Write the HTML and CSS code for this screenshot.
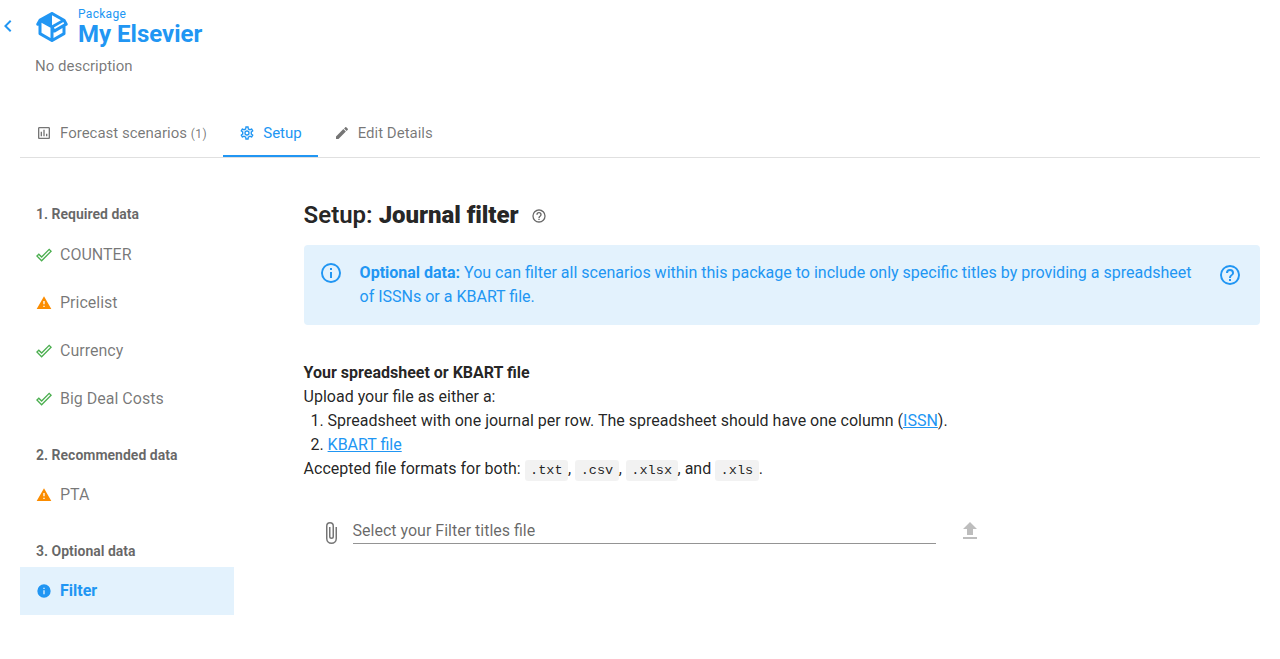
FILE: index.html
```
<!DOCTYPE html>
<html lang="en">
<head>
<meta charset="utf-8">
<title>My Elsevier - Setup</title>
<link rel="stylesheet" href="styles.css">
</head>
<body>
<svg class="sprite" xmlns="http://www.w3.org/2000/svg">
  <symbol id="check" viewBox="0 0 24 24"><path d="M19.78,2.2L24,6.42L8.44,22L0,13.55L4.22,9.33L8.44,13.55L19.78,2.2M19.78,5L8.44,16.36L4.22,12.19L2.81,13.55L8.44,19.17L21.19,6.42L19.78,5Z"/></symbol>
  <symbol id="alert" viewBox="0 0 24 24"><path d="M13 14H11V9H13M13 18H11V16H13M1 21H23L12 2L1 21Z"/></symbol>
  <symbol id="help" viewBox="0 0 24 24"><path d="M11,18H13V16H11V18M12,2A10,10 0 0,0 2,12A10,10 0 0,0 12,22A10,10 0 0,0 22,12A10,10 0 0,0 12,2M12,20C7.59,20 4,16.41 4,12C4,7.59 7.59,4 12,4C16.41,4 20,7.59 20,12C20,16.41 16.41,20 12,20M12,6A4,4 0 0,0 8,10H10A2,2 0 0,1 12,8A2,2 0 0,1 14,10C14,12 11,11.75 11,15H13C13,12.75 16,12.5 16,10A4,4 0 0,0 12,6Z"/></symbol>
</svg>
<header class="header">
  <svg class="icon back" viewBox="0 0 24 24"><path d="M15.41,16.58L10.83,12L15.41,7.41L14,6L8,12L14,18L15.41,16.58Z"/></svg>
  <svg class="icon package" viewBox="0 0 24 24"><path d="M2,10.96C1.5,10.68 1.35,10.07 1.63,9.59L3.13,7C3.24,6.8 3.41,6.66 3.6,6.58L11.43,2.18C11.59,2.06 11.79,2 12,2C12.21,2 12.41,2.06 12.57,2.18L20.47,6.62C20.66,6.72 20.82,6.88 20.91,7.08L22.36,9.6C22.64,10.08 22.47,10.69 22,10.96L21,11.54V16.5C21,16.88 20.79,17.21 20.47,17.38L12.57,21.82C12.41,21.94 12.21,22 12,22C11.79,22 11.59,21.94 11.43,21.82L3.53,17.38C3.21,17.21 3,16.88 3,16.5V10.96C2.7,11.13 2.32,11.14 2,10.96M12,4.15V4.15L12,10.85V10.85L17.96,7.5L12,4.15M5,15.91L11,19.29V12.58L5,9.21V15.91M19,15.91V12.69L14,15.59C13.67,15.77 13.3,15.76 13,15.6V19.29L19,15.91M13.85,13.36L20.13,9.73L19.55,8.72L13.27,12.35L13.85,13.36Z"/></svg>
  <div class="heading">
    <div class="kind">Package</div>
    <h1 class="name">My Elsevier</h1>
  </div>
</header>
<p class="description">No description</p>
<nav class="tabs">
  <a class="tab"><svg class="icon small" viewBox="0 0 24 24"><path d="M9 17H7V10H9V17M13 17H11V7H13V17M17 17H15V13H17V17M19 19H5V5H19V19.1M19 3H5C3.9 3 3 3.9 3 5V19C3 20.1 3.9 21 5 21H19C20.1 21 21 20.1 21 19V5C21 3.9 20.1 3 19 3Z"/></svg><span>Forecast scenarios <span class="count">(1)</span></span></a>
  <a class="tab active"><svg class="icon small" viewBox="0 0 24 24"><path d="M12,8A4,4 0 0,1 16,12A4,4 0 0,1 12,16A4,4 0 0,1 8,12A4,4 0 0,1 12,8M12,10A2,2 0 0,0 10,12A2,2 0 0,0 12,14A2,2 0 0,0 14,12A2,2 0 0,0 12,10M10,22C9.75,22 9.54,21.82 9.5,21.58L9.13,18.93C8.5,18.68 7.96,18.34 7.44,17.94L4.95,18.95C4.73,19.03 4.46,18.95 4.34,18.73L2.34,15.27C2.21,15.05 2.27,14.78 2.46,14.63L4.57,12.97L4.5,12L4.57,11L2.46,9.37C2.27,9.22 2.21,8.95 2.34,8.73L4.34,5.27C4.46,5.05 4.73,4.96 4.95,5.05L7.44,6.05C7.96,5.66 8.5,5.32 9.13,5.07L9.5,2.42C9.54,2.18 9.75,2 10,2H14C14.25,2 14.46,2.18 14.5,2.42L14.87,5.07C15.5,5.32 16.04,5.66 16.56,6.05L19.05,5.05C19.27,4.96 19.54,5.05 19.66,5.27L21.66,8.73C21.79,8.95 21.73,9.22 21.54,9.37L19.43,11L19.5,12L19.43,13L21.54,14.63C21.73,14.78 21.79,15.05 21.66,15.27L19.66,18.73C19.54,18.95 19.27,19.04 19.05,18.95L16.56,17.95C16.04,18.34 15.5,18.68 14.87,18.93L14.5,21.58C14.46,21.82 14.25,22 14,22H10M11.25,4L10.88,6.61C9.68,6.86 8.62,7.5 7.85,8.39L5.44,7.35L4.69,8.65L6.8,10.2C6.4,11.37 6.4,12.64 6.8,13.8L4.68,15.36L5.43,16.66L7.86,15.62C8.63,16.5 9.68,17.14 10.87,17.38L11.24,20H12.76L13.13,17.39C14.32,17.14 15.37,16.5 16.14,15.62L18.57,16.66L19.32,15.36L17.2,13.81C17.6,12.64 17.6,11.37 17.2,10.2L19.31,8.65L18.56,7.35L16.15,8.39C15.38,7.5 14.32,6.86 13.12,6.62L12.75,4H11.25Z"/></svg><span>Setup</span></a>
  <a class="tab"><svg class="icon small" viewBox="0 0 24 24"><path d="M20.71,7.04C21.1,6.65 21.1,6 20.71,5.63L18.37,3.29C18,2.9 17.35,2.9 16.96,3.29L15.12,5.12L18.87,8.87M3,17.25V21H6.75L17.81,9.93L14.06,6.18L3,17.25Z"/></svg><span>Edit Details</span></a>
</nav>
<div class="layout">
  <aside class="sidebar">
    <h3 class="group first">1. Required data</h3>
    <a class="item"><svg class="icon small ok"><use href="#check"/></svg>COUNTER</a>
    <a class="item"><svg class="icon small warn"><use href="#alert"/></svg>Pricelist</a>
    <a class="item"><svg class="icon small ok"><use href="#check"/></svg>Currency</a>
    <a class="item"><svg class="icon small ok"><use href="#check"/></svg>Big Deal Costs</a>
    <h3 class="group">2. Recommended data</h3>
    <a class="item"><svg class="icon small warn"><use href="#alert"/></svg>PTA</a>
    <h3 class="group">3. Optional data</h3>
    <a class="item current"><svg class="icon small" viewBox="0 0 24 24"><path d="M13,9H11V7H13M13,17H11V11H13M12,2A10,10 0 0,0 2,12A10,10 0 0,0 12,22A10,10 0 0,0 22,12A10,10 0 0,0 12,2Z"/></svg>Filter</a>
  </aside>
  <main class="content">
    <h2 class="title"><span>Setup: <b>Journal filter</b></span><svg class="icon small"><use href="#help"/></svg></h2>
    <div class="notice">
      <svg class="icon" viewBox="0 0 24 24"><path d="M11,9H13V7H11M12,20C7.59,20 4,16.41 4,12C4,7.59 7.59,4 12,4C16.41,4 20,7.59 20,12C20,16.41 16.41,20 12,20M12,2A10,10 0 0,0 2,12A10,10 0 0,0 12,22A10,10 0 0,0 22,12A10,10 0 0,0 12,2M11,17H13V11H11V17Z"/></svg>
      <p class="notice-text"><b>Optional data:</b> You can filter all scenarios within this package to include only specific titles by providing a spreadsheet of ISSNs or a KBART file.</p>
      <svg class="icon notice-help"><use href="#help"/></svg>
    </div>
    <section class="instructions">
      <div><b>Your spreadsheet or KBART file</b></div>
      <div>Upload your file as either a:</div>
      <ol class="steps">
        <li>Spreadsheet with one journal per row. The spreadsheet should have one column (<a class="link">ISSN</a>).</li>
        <li><a class="link">KBART file</a></li>
      </ol>
      <div>Accepted file formats for both: <code>.txt</code>, <code>.csv</code>, <code>.xlsx</code>, and <code>.xls</code>.</div>
    </section>
    <div class="upload">
      <svg class="icon clip" viewBox="0 0 24 24"><path d="M16.5,6V17.5A4,4 0 0,1 12.5,21.5A4,4 0 0,1 8.5,17.5V5A2.5,2.5 0 0,1 11,2.5A2.5,2.5 0 0,1 13.5,5V15.5A1,1 0 0,1 12.5,16.5A1,1 0 0,1 11.5,15.5V6H10V15.5A2.5,2.5 0 0,0 12.5,18A2.5,2.5 0 0,0 15,15.5V5A4,4 0 0,0 11,1A4,4 0 0,0 7,5V17.5A5.5,5.5 0 0,0 12.5,23A5.5,5.5 0 0,0 18,17.5V6H16.5Z"/></svg>
      <div class="field">Select your Filter titles file</div>
      <svg class="icon send" viewBox="0 0 24 24"><path d="M9,16V10H5L12,3L19,10H15V16H9M5,20V18H19V20H5Z"/></svg>
    </div>
  </main>
</div>
</body>
</html>
```
FILE: styles.css
```
* { box-sizing: border-box; margin: 0; padding: 0; }
body {
  height: 659px;
  overflow: hidden;
  background: #fff;
  color: rgba(0, 0, 0, .87);
  font: 16px/24px Roboto, "Liberation Sans", sans-serif;
}
b { font-weight: 700; }
.sprite { display: none; }
.icon { display: block; flex: none; width: 24px; height: 24px; fill: currentColor; }
.icon.small { width: 16px; height: 16px; }

.header { display: flex; height: 53px; color: #2196f3; }
.back { margin: 14px 0 0 -4px; }
.package { width: 36px; height: 36px; margin: 9px 8px 0 14px; }
.kind { margin-top: 7px; font-size: 12px; line-height: 14px; letter-spacing: .3px; }
.name { font-size: 24px; line-height: 26px; font-weight: 700; }
.description { padding-left: 35px; font-size: 15px; line-height: 26px; color: rgba(0, 0, 0, .54); }

.tabs { display: flex; height: 49px; margin: 30px 20px 0; border-bottom: 1px solid #e0e0e0; }
.tab {
  display: flex;
  align-items: center;
  gap: 8px;
  height: 48px;
  padding: 2px 16px 0;
  border-bottom: 2px solid transparent;
  font-size: 15px;
  color: rgba(0, 0, 0, .54);
}
.tab .count { font-size: 12px; letter-spacing: .5px; }
.tab.active { color: #2196f3; border-color: #2196f3; }

.layout { display: flex; gap: 69.6px; padding: 0 20px; }
.sidebar { width: 214px; padding-top: 33px; }
.group { padding-left: 16px; height: 40px; font-size: 14px; line-height: 48px; font-weight: 700; color: rgba(0, 0, 0, .6); }
.group.first { line-height: 46px; }
.item { display: flex; align-items: center; gap: 8px; height: 48px; padding-left: 16px; color: rgba(0, 0, 0, .54); }
.item + .group { margin-top: 8px; }
.ok { color: #4caf50; }
.warn { color: #fb8c00; }
.item.current { background: #e3f2fd; color: #2196f3; font-weight: 700; }

.content { flex: 1; padding-top: 41px; }
.title { display: flex; align-items: center; gap: 12px; height: 32px; font-size: 24px; font-weight: 600; }
.title b { font-weight: 900; letter-spacing: -.06px; }
.title .icon { margin-top: 2px; color: rgba(0, 0, 0, .6); }
.notice { display: flex; height: 80px; margin-top: 14px; padding: 16px 18px 0 15.5px; border-radius: 4px; background: #e3f2fd; color: #2196f3; }
.notice-text { flex: 1; margin-left: 16.5px; }
.notice-help { margin: 2px 0 0 20px; }
.instructions { margin-top: 36px; }
.steps { padding-left: 24px; }
.link { color: #2196f3; text-decoration: underline; }
code { padding: 2.7px 5.44px; border-radius: 3px; background: rgba(0, 0, 0, .05); font: 13.6px "Liberation Mono", monospace; }
.upload { display: flex; margin-top: 38px; padding-left: 15.4px; }
.clip { margin: 2px 9.6px 0 0; color: rgba(0, 0, 0, .54); }
.field { width: 583px; height: 25px; border-bottom: 1px solid #949494; color: rgba(0, 0, 0, .6); }
.send { margin-left: 22px; color: rgba(0, 0, 0, .26); }
```
